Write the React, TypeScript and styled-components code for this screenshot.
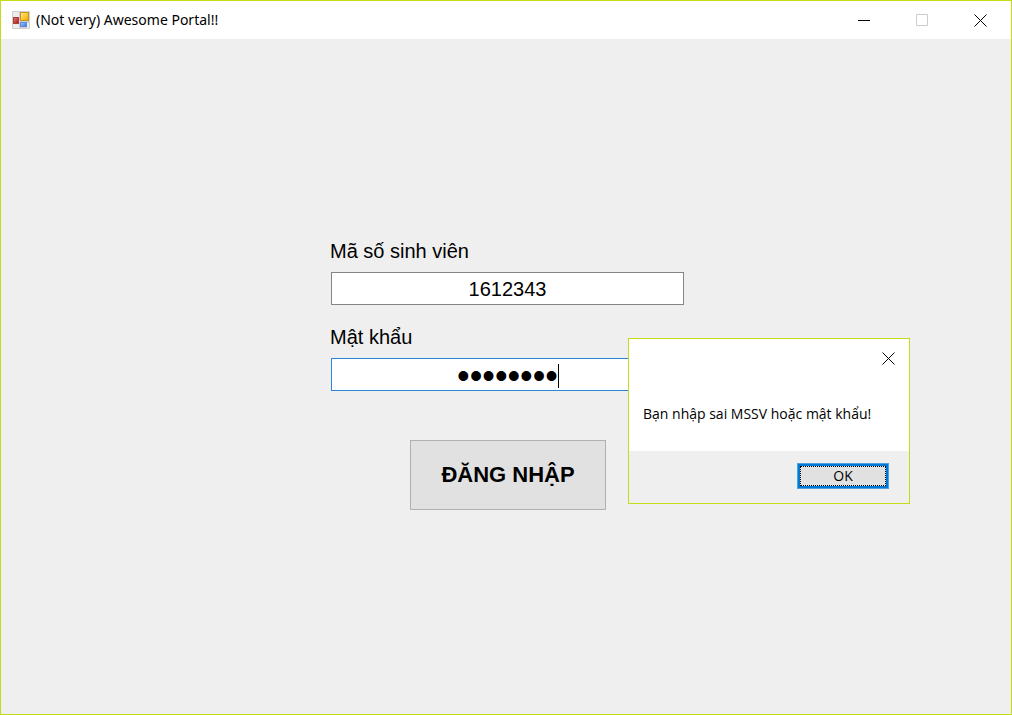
import React from "react";
import styled, { createGlobalStyle } from "styled-components";

const accent = "#c3dc16";
const systemFont = `"Open Sans", "Noto Sans", sans-serif`;
const formFont = `"Liberation Sans", Arial, sans-serif`;

const GlobalStyle = createGlobalStyle`
  * { box-sizing: border-box; }
  body { margin: 0; background: #efefef; color: #000; }
`;

const Window = styled.div`
  position: relative;
  display: flex;
  flex-direction: column;
  min-height: 100vh;
  border: 1px solid ${accent};
  background: #efefef;
`;

const TitleBar = styled.header`
  display: flex;
  align-items: stretch;
  height: 38px;
  padding: 0 2px 0 11px;
  background: #fff;
`;

const TitleLabel = styled.div`
  display: flex;
  flex: 1;
  align-items: center;
  gap: 6px;
`;

const Title = styled.h1`
  margin: 0;
  font: 400 14px/20px "Noto Sans", "Open Sans", sans-serif;
`;

const CaptionButton = styled.button<{ $compact?: boolean }>`
  display: flex;
  align-items: center;
  justify-content: center;
  width: ${(p) => (p.$compact ? 42 : 58)}px;
  padding: 0;
  border: 0;
  background: transparent;
  color: #000;
  &:disabled { color: #cccccc; }
`;

const Body = styled.main`
  display: flex;
  flex: 1;
  justify-content: center;
  padding: 199px 0 40px 4px;
`;

const LoginForm = styled.form`
  display: flex;
  flex-direction: column;
  width: 356px;
  font-family: ${formFont};
`;

const Field = styled.div`
  display: flex;
  flex-direction: column;
  gap: 8px;
  margin-bottom: 19px;
`;

const FieldLabel = styled.label`
  font-size: 20px;
  line-height: 26px;
`;

const InputWrap = styled.div`
  position: relative;
  display: flex;
  margin: 0 2px 0 1px;
`;

const TextInput = styled.input<{ $active?: boolean }>`
  width: 100%;
  height: 33px;
  padding: 2px 0 0;
  border: 1px solid ${(p) => (p.$active ? "#2a86d4" : "#858585")};
  border-radius: 0;
  outline: 0;
  background: #fff;
  color: #000;
  font-family: ${formFont};
  font-size: ${(p) => (p.$active ? 36 : 20)}px;
  text-align: center;
  caret-color: transparent;
`;

const Caret = styled.span`
  position: absolute;
  top: 6px;
  left: calc(50% + 50px);
  width: 1px;
  height: 24px;
  background: #000;
`;

const LoginButton = styled.button`
  align-self: center;
  width: 196px;
  height: 70px;
  margin-top: 30px;
  padding: 0;
  border: 1px solid #b0b0b0;
  background: #e1e1e1;
  color: #000;
  font: 700 22px/26px ${formFont};
`;

const Dialog = styled.section`
  position: absolute;
  top: 337px;
  left: calc(50% + 122px);
  display: flex;
  flex-direction: column;
  width: 282px;
  border: 1px solid ${accent};
  background: #fff;
  font: 400 14px/20px ${systemFont};
`;

const DialogTop = styled.div`
  display: flex;
  justify-content: flex-end;
  height: 38px;
`;

const Message = styled.p`
  margin: 0;
  padding: 27px 14px 27px;
`;

const DialogFooter = styled.footer`
  display: flex;
  justify-content: flex-end;
  padding: 12px 20px 14px;
  background: #efefef;
`;

const OkButton = styled.button`
  width: 92px;
  height: 26px;
  padding: 0;
  border: 1px solid #4ea2e3;
  box-shadow: inset 0 0 0 2px #0078d7;
  background: #e1e1e1;
  color: #000;
  font: 400 14px/20px ${systemFont};
  outline: 1px dotted #000;
  outline-offset: -4px;
`;

const CloseGlyph = () => (
  <svg width="13" height="13" viewBox="0 0 13 13" stroke="currentColor" strokeWidth="1" aria-hidden="true">
    <path d="M0.5 0.5L12.5 12.5M12.5 0.5L0.5 12.5" />
  </svg>
);

const AppIcon = () => (
  <svg width="18" height="18" viewBox="0 0 18 18" aria-hidden="true">
    <defs>
      <linearGradient id="gold" x1="0" y1="0" x2="1" y2="1">
        <stop offset="0" stopColor="#ffe9a0" />
        <stop offset="0.5" stopColor="#fbc93a" />
        <stop offset="1" stopColor="#e9a808" />
      </linearGradient>
      <linearGradient id="red" x1="0" y1="0" x2="1" y2="1">
        <stop offset="0" stopColor="#e08078" />
        <stop offset="1" stopColor="#a80f10" />
      </linearGradient>
      <linearGradient id="blue" x1="0" y1="0" x2="1" y2="1">
        <stop offset="0" stopColor="#a9ccff" />
        <stop offset="1" stopColor="#2f6fe0" />
      </linearGradient>
    </defs>
    <rect width="18" height="18" rx="1" fill="#cfcfcf" />
    <path d="M1 1h6v5H1zM1 13h6v4H1zM15 12h2v5h-2z" fill="#ececec" />
    <rect x="1.5" y="6.5" width="5" height="6" fill="url(#red)" stroke="#b33a36" />
    <rect x="8.5" y="1.5" width="8" height="8" fill="url(#gold)" stroke="#c99320" />
    <rect x="8.5" y="11.5" width="6" height="4" fill="url(#blue)" stroke="#5a8ae0" />
  </svg>
);

export default function App() {
  return (
    <Window>
      <GlobalStyle />
      <TitleBar>
        <TitleLabel>
          <AppIcon />
          <Title>(Not very) Awesome Portal!!</Title>
        </TitleLabel>
        <CaptionButton aria-label="Minimize">
          <svg width="12" height="13" viewBox="0 0 12 13" aria-hidden="true">
            <path d="M0 6h12v1H0z" fill="currentColor" />
          </svg>
        </CaptionButton>
        <CaptionButton aria-label="Maximize" disabled>
          <svg width="12" height="12" viewBox="0 0 12 12" fill="none" stroke="currentColor" aria-hidden="true">
            <path d="M0.5 0.5h11v11h-11z" />
          </svg>
        </CaptionButton>
        <CaptionButton aria-label="Close">
          <CloseGlyph />
        </CaptionButton>
      </TitleBar>

      <Body>
        <LoginForm onSubmit={(e) => e.preventDefault()}>
          <Field>
            <FieldLabel htmlFor="student-id">Mã số sinh viên</FieldLabel>
            <InputWrap>
              <TextInput id="student-id" type="text" defaultValue="1612343" />
            </InputWrap>
          </Field>
          <Field>
            <FieldLabel htmlFor="password">Mật khẩu</FieldLabel>
            <InputWrap>
              <TextInput id="password" type="password" defaultValue="12345678" $active />
              <Caret />
            </InputWrap>
          </Field>
          <LoginButton type="submit">ĐĂNG NHẬP</LoginButton>
        </LoginForm>
      </Body>

      <Dialog role="alertdialog" aria-describedby="login-error">
        <DialogTop>
          <CaptionButton $compact aria-label="Close message">
            <CloseGlyph />
          </CaptionButton>
        </DialogTop>
        <Message id="login-error">Bạn nhập sai MSSV hoặc mật khẩu!</Message>
        <DialogFooter>
          <OkButton type="button">OK</OkButton>
        </DialogFooter>
      </Dialog>
    </Window>
  );
}
